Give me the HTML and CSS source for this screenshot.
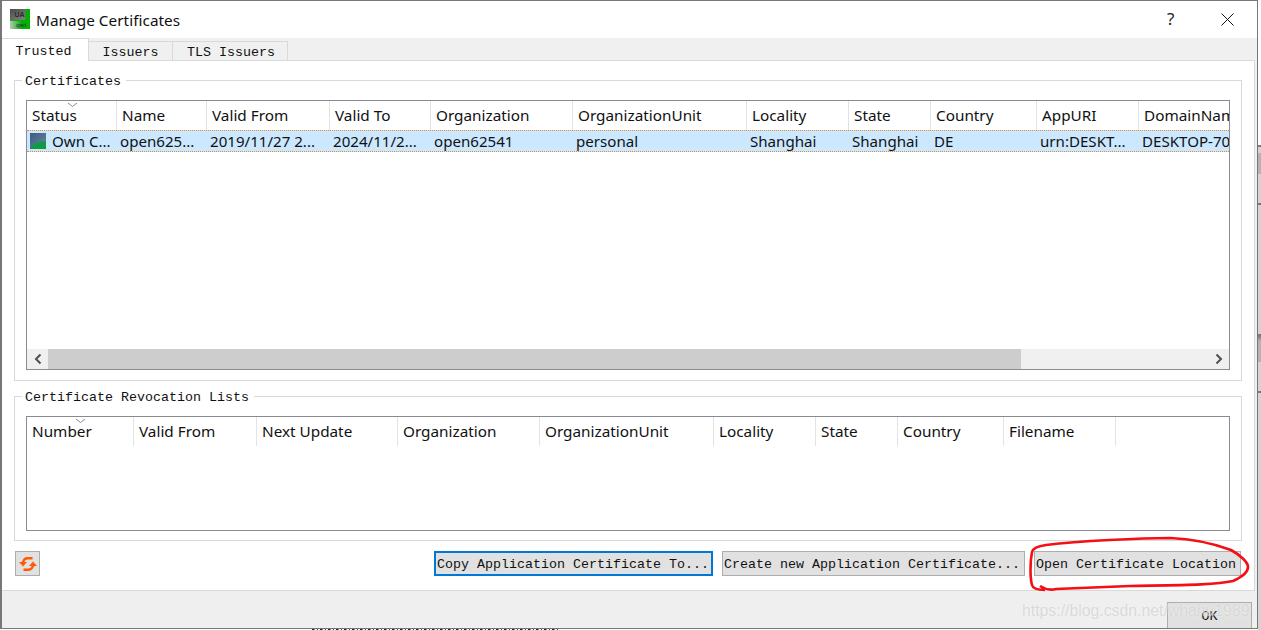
FILE: index.html
```html
<!DOCTYPE html>
<html lang="en">
<head>
<meta charset="utf-8">
<title>Manage Certificates</title>
<link rel="stylesheet" href="styles.css">
</head>
<body>
<div class="window">
  <header class="titlebar">
    <svg class="appicon" viewBox="0 0 20 20" aria-hidden="true">
      <defs>
        <linearGradient id="ag" x1="0" y1="0" x2="1" y2="1">
          <stop offset="0" stop-color="#4a4a4a"/><stop offset="1" stop-color="#7d8a7d"/>
        </linearGradient>
        <linearGradient id="ag2" x1="0" y1="0" x2="1" y2="0">
          <stop offset="0" stop-color="#b8c8b8"/><stop offset="1" stop-color="#08a808"/>
        </linearGradient>
      </defs>
      <rect width="20" height="20" fill="#05b005"/>
      <path d="M0 0H16L15 11H0Z" fill="url(#ag)"/>
      <rect x="0" y="12" width="12" height="8" fill="url(#ag2)"/>
      <text x="9.500" y="8" class="appicon-ua">UA</text>
      <text x="11" y="17.500" class="appicon-x">xpert</text>
    </svg>
    <h1 class="title">Manage Certificates</h1>
    <span class="help">?</span>
    <svg class="close" viewBox="0 0 13 13" aria-hidden="true"><path d="M.5 .5L12.500 12.500M12.500 .5L.5 12.500" stroke="#111" stroke-width="1" fill="none"/></svg>
  </header>

  <nav class="tabs">
    <span class="tab active">Trusted</span>
    <span class="tab t-issuers">Issuers</span>
    <span class="tab t-tls">TLS Issuers</span>
  </nav>

  <main class="pane">
    <fieldset class="group group-a">
      <legend>Certificates</legend>
      <div class="table table-a">
        <div class="thead cols-a">
          <span class="th">Status<svg class="sort" viewBox="0 0 9 4"><path d="M0 0L4.500 3.500L9 0" fill="none" stroke="#8a8a8a"/></svg></span>
          <span class="th">Name</span><span class="th">Valid From</span><span class="th">Valid To</span>
          <span class="th">Organization</span><span class="th">OrganizationUnit</span><span class="th">Locality</span>
          <span class="th">State</span><span class="th">Country</span><span class="th">AppURI</span><span class="th last">DomainName</span>
        </div>
        <div class="row cols-a">
          <span class="td first">
            <svg class="staticon" viewBox="0 0 16 16" aria-hidden="true">
              <defs><linearGradient id="sg" x1="0" y1="0" x2="1" y2="1"><stop offset="0" stop-color="#3a5a85"/><stop offset="1" stop-color="#6a8a9a"/></linearGradient></defs>
              <rect width="16" height="16" fill="url(#sg)"/>
              <path d="M0 16C2 11 7 9 16 8V16Z" fill="#119a45"/>
            </svg>Own C...</span>
          <span class="td">open625...</span><span class="td">2019/11/27 2...</span><span class="td">2024/11/2...</span>
          <span class="td">open62541</span><span class="td">personal</span><span class="td">Shanghai</span>
          <span class="td">Shanghai</span><span class="td">DE</span><span class="td">urn:DESKT...</span><span class="td last">DESKTOP-70</span>
        </div>
        <div class="spacer"></div>
        <div class="hscroll">
          <span class="sb-btn"><svg viewBox="0 0 8 12"><path d="M6.500 1.500L2 6L6.500 10.500" fill="none" stroke="#505050" stroke-width="2"/></svg></span>
          <span class="sb-thumb"></span>
          <span class="sb-track"></span>
          <span class="sb-btn"><svg viewBox="0 0 8 12"><path d="M1.500 1.500L6 6L1.500 10.500" fill="none" stroke="#505050" stroke-width="2"/></svg></span>
        </div>
      </div>
    </fieldset>

    <fieldset class="group group-b">
      <legend>Certificate Revocation Lists</legend>
      <div class="table table-b">
        <div class="thead cols-b">
          <span class="th">Number<svg class="sort" viewBox="0 0 9 4"><path d="M0 0L4.500 3.500L9 0" fill="none" stroke="#8a8a8a"/></svg></span>
          <span class="th">Valid From</span><span class="th">Next Update</span><span class="th">Organization</span>
          <span class="th">OrganizationUnit</span><span class="th">Locality</span><span class="th">State</span>
          <span class="th">Country</span><span class="th">Filename</span>
        </div>
      </div>
    </fieldset>

    <div class="actions">
      <button class="btn icon-btn" type="button" aria-label="Refresh">
        <svg viewBox="0 0 18 14" aria-hidden="true">
          <path d="M13.500 1.300H8.500C6.300 1.300 4.600 3 4 5.500" fill="none" stroke="#ff5a00" stroke-width="2.400"/>
          <path d="M0 5H8L4 9.500Z" fill="#ff5a00"/>
          <path d="M4.500 12.700H9.500C11.700 12.700 13.400 11 14 8.500" fill="none" stroke="#ff5a00" stroke-width="2.400"/>
          <path d="M18 9H10L14 4.500Z" fill="#ff5a00"/>
        </svg>
      </button>
      <span class="grow"></span>
      <button class="btn focus b-copy" type="button">Copy Application Certificate To...</button>
      <button class="btn b-create" type="button">Create new Application Certificate...</button>
      <button class="btn b-open" type="button">Open Certificate Location</button>
    </div>
  </main>

  <footer class="bottom">
    <button class="btn ok" type="button">OK</button>
  </footer>
</div>

<div class="desk-strip"></div>
<div class="desk-ticks"></div>
<svg class="scribble" viewBox="0 0 1261 630" aria-hidden="true">
  <path d="M1045 590C1038 590 1033 589 1032 585C1030 578 1030 562 1032 552C1033 548 1038 546 1046 545C1080 541 1140 538 1170 538C1195 539 1215 544 1231 550C1240 555 1248 562 1248 567C1248 573 1242 577 1233 581C1215 585 1180 585 1130 586C1100 587 1075 588 1056 589C1052 590 1046 590 1040 586" fill="none" stroke="#f40f14" stroke-width="2.600"/>
</svg>
<span class="watermark">https://blog.csdn.net/whahu1989</span>
</body>
</html>
```
FILE: styles.css
```css
* { box-sizing: border-box; }
html, body { margin: 0; height: 630px; overflow: hidden; background: #fff; }
body { position: relative; font-family: "Noto Sans", "Open Sans", sans-serif; color: #111; }

.window {
  width: 1258px;
  height: 629px;
  display: flex;
  flex-direction: column;
  background: #f0f0f0;
  border: 1px solid #777;
  border-left-width: 2px;
}

.titlebar {
  height: 37px;
  flex: none;
  display: flex;
  align-items: center;
  background: #fff;
  padding: 0 0 1px 8px;
}
.appicon { width: 20px; height: 20px; flex: none; }
.appicon-ua { font: bold 7px "Liberation Sans", sans-serif; fill: #2c2c2c; text-anchor: middle; }
.appicon-x { font: italic 4.500px "Liberation Sans", sans-serif; fill: #123; text-anchor: middle; }
.title { margin: 0 0 0 6px; padding-top: 1px; font-size: 15.300px; letter-spacing: .05px; font-weight: 400; line-height: 20px; flex: 1; color: #111; }
.help { font-size: 17px; width: 12px; margin-right: 42px; color: #222; line-height: 20px; }
.close { width: 13px; height: 13px; margin-right: 23px; }

.tabs {
  height: 23px;
  flex: none;
  display: flex;
  align-items: flex-end;
  font: 13.33px/18px "Liberation Mono", monospace;
  position: relative;
  z-index: 1;
}
.tab {
  height: 20px;
  border: 1px solid #d9d9d9;
  margin-left: -1px;
  background: #f0f0f0;
  text-align: center;
  line-height: 21px;
}
.tab.active {
  width: 87px;
  height: 23px;
  margin-left: 0;
  padding-right: 3px;
  background: #fff;
  border-left: 0;
  border-bottom-color: #fff;
  line-height: 25px;
}
.t-issuers { width: 85px; }
.t-tls { width: 116px; padding-left: 2px; }

.pane {
  flex: none;
  height: 531px;
  margin-top: -1px;
  margin-right: 2px;
  background: #fff;
  border: 1px solid #d9d9d9;
  border-left: 0;
  padding: 11px 12px 0 12px;
  display: flex;
  flex-direction: column;
}

.group {
  margin: 0;
  padding: 0 11px;
  border: 1px solid #d9d9d9;
  min-width: 0;
  flex: none;
}
.group legend {
  padding: 2px 5px 0 3px;
  margin-left: -4px;
  font: 13.33px/15px "Liberation Mono", monospace;
}
.group-a { height: 309px; }
.group-b { height: 153px; margin-top: 7px; }

.table {
  border: 1px solid #8a8a96;
  display: flex;
  flex-direction: column;
  overflow: hidden;
  background: #fff;
  margin-top: 11px;
}
.table-a { height: 270px; }
.table-b { height: 115px; }

.cols-a { display: grid; grid-template-columns: 90px 90px 123px 101px 142px 174px 102px 82px 106px 102px 1fr; }
.cols-b { display: grid; grid-template-columns: 107px 123px 141px 142px 174px 102px 82px 106px 112px 1fr; }

.thead { height: 29px; flex: none; font-size: 15.300px; line-height: 28px; color: #111; }
.th {
  position: relative;
  padding-left: 5px;
  white-space: nowrap;
  overflow: hidden;
  border-right: 1px solid #e3e3e3;
}
.th.last { border-right: 0; }
.sort { position: absolute; top: 2px; left: 41px; width: 9px; height: 4px; }
.cols-b .sort { left: 49px; }

.row {
  height: 22px;
  flex: none;
  background: #cce8ff;
  border-top: 1px dotted #e8892b;
  border-bottom: 1px dotted #e8892b;
  font-size: 15.100px;
  line-height: 20px;
}
.td { padding-left: 3px; white-space: nowrap; overflow: hidden; }
.td.first { display: flex; align-items: center; gap: 6px; }
.staticon { width: 16px; height: 16px; flex: none; }

.spacer { flex: 1; }
.hscroll { height: 20px; flex: none; display: flex; background: #f0f0f0; }
.sb-btn { width: 21px; flex: none; display: flex; align-items: center; justify-content: center; }
.sb-btn svg { width: 8px; height: 12px; }
.sb-thumb { width: 973px; background: #cdcdcd; flex: none; }
.sb-track { flex: 1; }

.actions {
  display: flex;
  align-items: stretch;
  height: 25px;
  margin-top: 10px;
  gap: 9px;
  margin-left: 1px;
  margin-right: 1px;
}
.grow { flex: 1; }
.btn {
  margin: 0;
  padding: 3px 0 0 1px;
  background: #e1e1e1;
  border: 1px solid #adadad;
  font: 13.33px/18px "Liberation Mono", monospace;
  color: #111;
  white-space: nowrap;
  text-align: left;
}
.btn.focus { border: 2px solid #0078d7; }
.icon-btn { width: 25px; padding: 0; display: flex; align-items: center; justify-content: center; }
.icon-btn svg { width: 18px; height: 14px; }
.b-copy { width: 279px; }
.b-create { width: 303px; }
.b-open { width: 207px; }

.bottom {
  flex: 1;
  background: #efefef;
  display: flex;
  justify-content: flex-end;
  align-items: flex-end;
  padding-right: 5px;
}
.ok { width: 85px; height: 26px; background: #e1e1e1; border-bottom: 0; text-align: center; padding: 3px 0 0; }

.desk-strip {
  position: absolute;
  left: 1258px;
  top: 145px;
  width: 3px;
  height: 485px;
  background: linear-gradient(#7a7a7a 0 2px, #d4d4d4 2px 8px, #b4b4b4 8px 29px, #d4d4d4 29px 58px, #7a7a7a 58px 60px, #d4d4d4 60px 189px, #7a7a7a 189px 191px, #b4b4b4 196px 217px, #d4d4d4 217px 246px, #7a7a7a 246px 248px, #d4d4d4 248px);
}
.desk-ticks {
  position: absolute;
  left: 312px;
  top: 629px;
  width: 246px;
  height: 1px;
  background: repeating-linear-gradient(90deg, #222 0 2px, #b98a4a 2px 3px, #fff 3px 5px, #3a5a8a 5px 6px, #fff 6px 8px);
}
.scribble { position: absolute; left: 0; top: 0; width: 1261px; height: 630px; pointer-events: none; }
.watermark {
  position: absolute;
  left: 1022px;
  top: 600px;
  font: 15.800px/22px "Liberation Sans", sans-serif;
  color: rgba(208, 208, 208, .75);
  text-shadow: 0 0 2px rgba(255, 255, 255, .7);
  white-space: nowrap;
}
```
